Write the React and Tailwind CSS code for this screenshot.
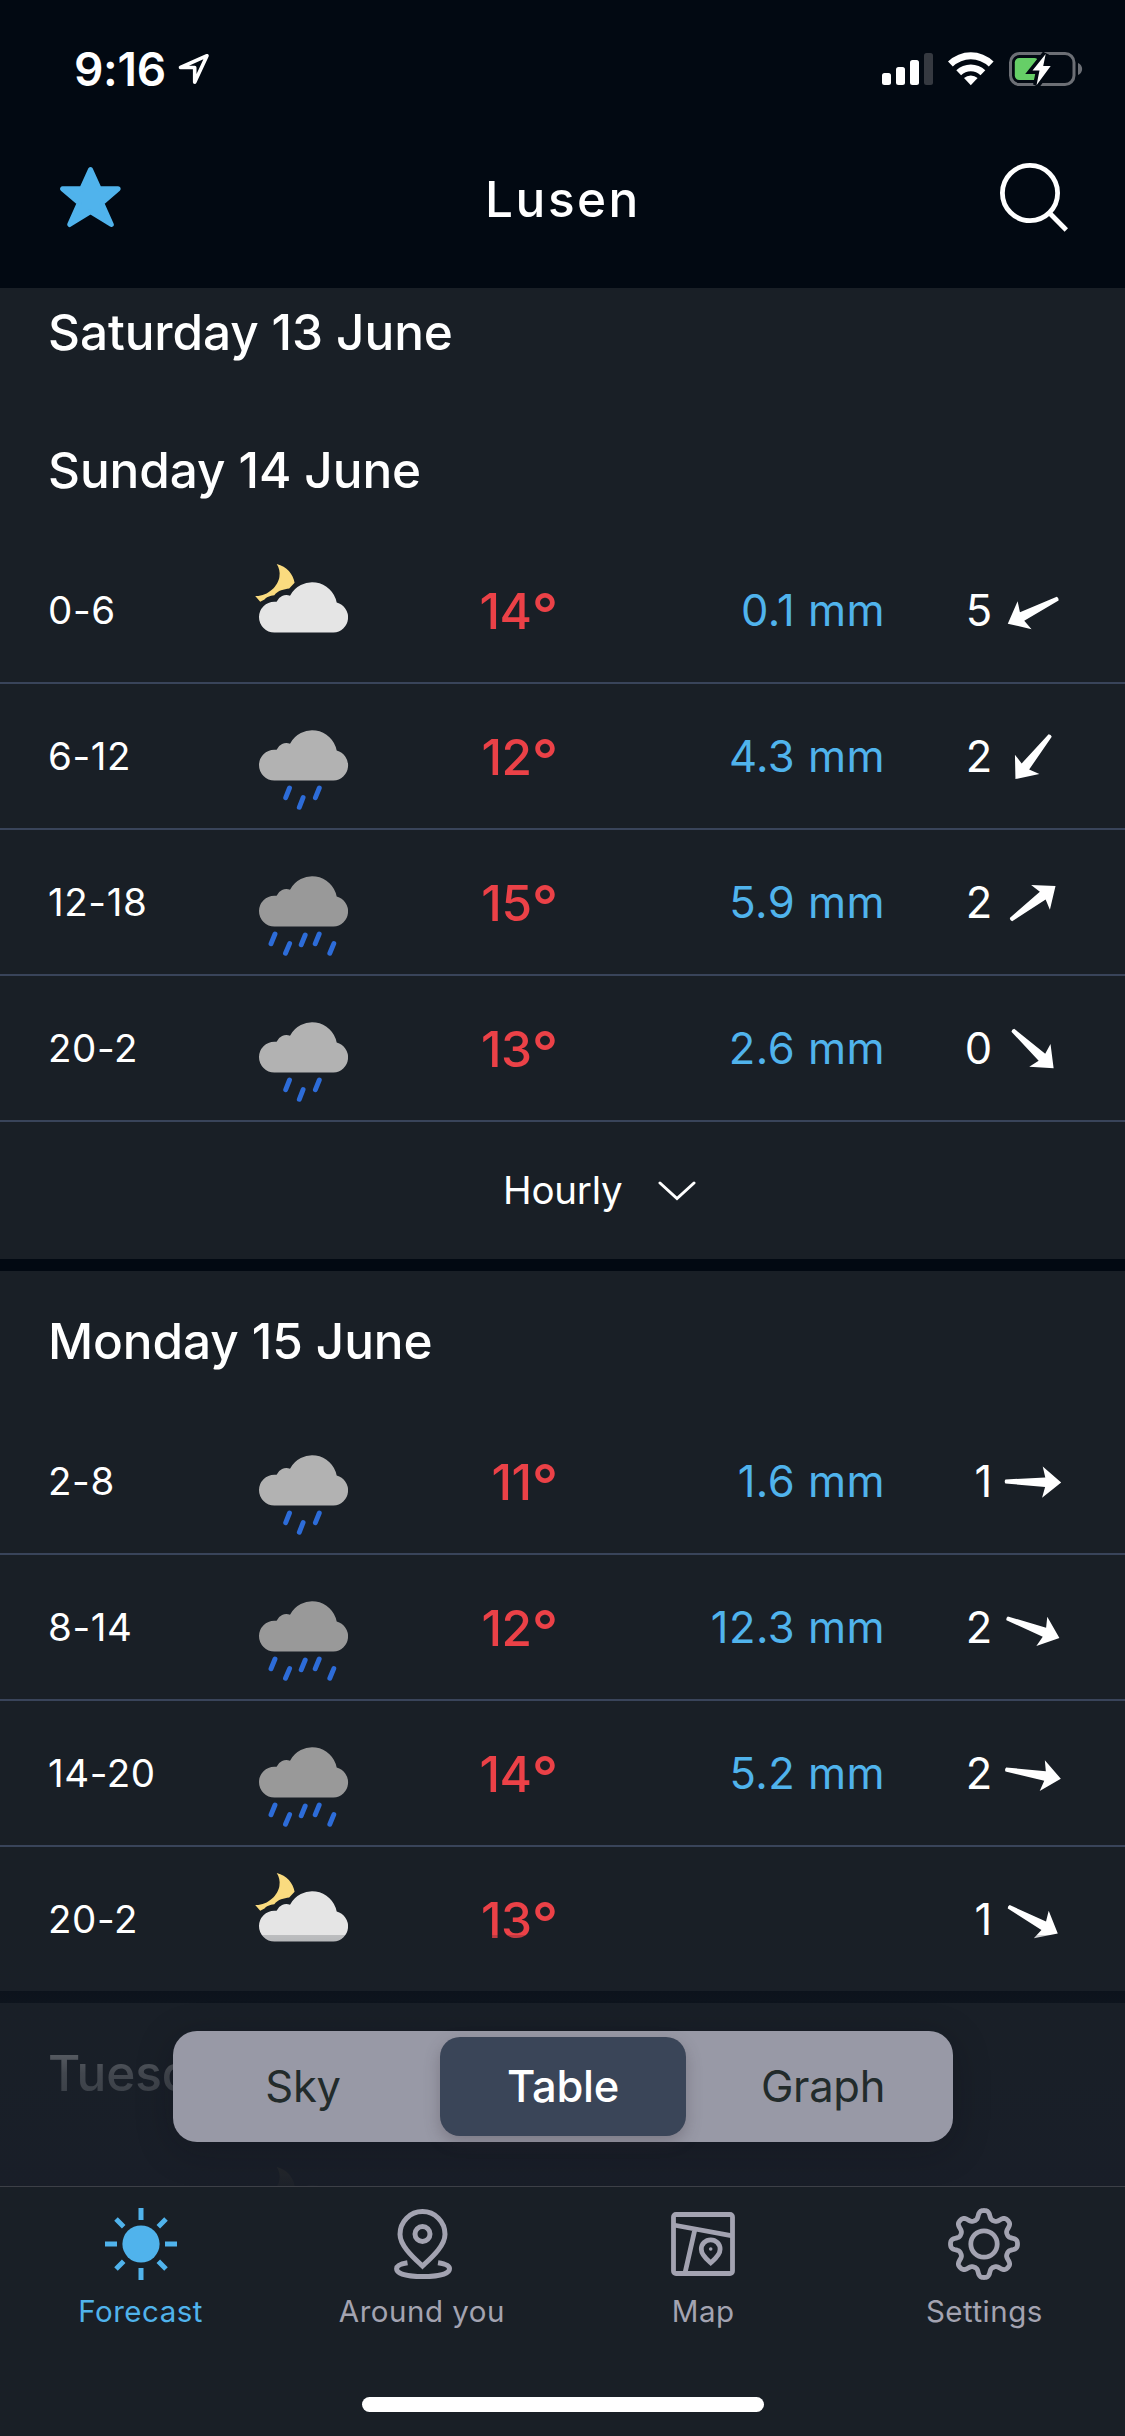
import React, { useState } from "react";

const CLOUD =
  "M15.4 50.5A15.4 15.4 0 0 1 15.4 19.7H17.6A10.5 10.5 0 0 1 31 13.7A25 25 0 0 1 77.7 20.6A15.2 15.2 0 0 1 74.5 50.5Z";

const LIGHT_RAIN = "M30.5 58l-3.8 9.7M44.1 67.6l-3.8 9.7M60.3 58l-3.9 9.7";
const HEAVY_RAIN =
  "M16 58l-4 9.7M30.6 67.6l-4.1 9.7M46.2 59l-4 9.7M60.2 58l-4 9.7M74.8 67.6l-4 9.7";

const days = [
  { title: "Saturday 13 June", rows: [] },
  {
    title: "Sunday 14 June",
    hourly: true,
    rows: [
      { time: "0-6", sky: "night", temp: 14, rain: "0.1 mm", wind: 5, dir: 153.4 },
      { time: "6-12", sky: "light", temp: 12, rain: "4.3 mm", wind: 2, dir: 128.5 },
      { time: "12-18", sky: "heavy", temp: 15, rain: "5.9 mm", wind: 2, dir: -37 },
      { time: "20-2", sky: "light", temp: 13, rain: "2.6 mm", wind: 0, dir: 43 },
    ],
  },
  {
    title: "Monday 15 June",
    rows: [
      { time: "2-8", sky: "light", temp: 11, rain: "1.6 mm", wind: 1, dir: 1.2 },
      { time: "8-14", sky: "heavy", temp: 12, rain: "12.3 mm", wind: 2, dir: 20.5 },
      { time: "14-20", sky: "heavy", temp: 14, rain: "5.2 mm", wind: 2, dir: 9.5 },
      { time: "20-2", sky: "night", temp: 13, rain: "", wind: 1, dir: 28.5 },
    ],
  },
];

// outline of the settings cog, eight rounded teeth
const GEAR =
  Array.from({ length: 241 }, (_, i) => {
    const a = (i / 240) * Math.PI * 2;
    const r = 29.3 + (4.2 * Math.tanh(1.6 * Math.cos(8 * a))) / Math.tanh(1.6);
    const x = (36 + r * Math.sin(a)).toFixed(2);
    const y = (36 - r * Math.cos(a)).toFixed(2);
    return `${i ? "L" : "M"}${x} ${y}`;
  }).join("") + "Z";

function WeatherIcon({ sky }) {
  if (sky === "night") {
    return (
      <svg
        width="90"
        height="51"
        viewBox="0 0 90 51"
        className="mt-[44px] block overflow-visible"
      >
        <path
          d="M17.7 -18C28 -15.5 34 -8 35.6 0.8L30.2 6.4C25 7.3 19 7.8 15.3 13.3C11 13.6 7 15.5 5.5 17.6L1.2 19.8L-3.8 14C9 14.5 19 4 20.4 -5C21.3 -10 20 -14.5 17.7 -18Z"
          fill="#fadb7f"
        />
        <path d={CLOUD} fill="#e5e5e5" />
      </svg>
    );
  }
  return (
    <svg
      width="90"
      height="81"
      viewBox="0 0 90 81"
      className="mt-[46px] block overflow-visible"
    >
      <path d={CLOUD} fill={sky === "heavy" ? "#999999" : "#b2b2b2"} />
      <path
        d={sky === "heavy" ? HEAVY_RAIN : LIGHT_RAIN}
        stroke="#2d6cd8"
        strokeWidth="4.9"
        strokeLinecap="round"
      />
    </svg>
  );
}

function WindArrow({ dir }) {
  return (
    <svg width="60" height="60" viewBox="-30 -30 60 60" className="ml-[11px] mt-[2px]">
      <path
        transform={`rotate(${dir})`}
        d="M-27.6 -2L12.2 -4.8L9.4 -15.6L28.2 0L9.4 15.6L12.2 4.8L-27.6 2Q-29 0 -27.6 -2Z"
        fill="#fff"
      />
    </svg>
  );
}

function Row({ row, last }) {
  return (
    <div
      className={`flex items-center text-[43.5px] ${
        last ? "h-[144px]" : "h-[146px] border-b-2 border-[#39445a]"
      }`}
    >
      <div className="w-[259.2px] pl-[48px] pt-[2px] text-[38.5px] tracking-[0.6px]">
        {row.time}
      </div>
      <div className="h-full w-[90px]">
        <WeatherIcon sky={row.sky} />
      </div>
      <div className="flex w-[209px] justify-end pt-[4px] text-[49.5px] leading-[60px] font-medium tracking-[-0.4px] text-[#eb4147]">
        {row.temp}
        <span className="pt-[3px] text-[58px] tracking-normal">°</span>
      </div>
      <div className="w-[327px] pt-[2px] text-right tracking-[0.5px] text-[#50b3ec]">
        {row.rain}
      </div>
      <div className="w-[107px] pt-[2px] text-right">{row.wind}</div>
      <WindArrow dir={row.dir} />
    </div>
  );
}

function DayTitle({ children }) {
  return (
    <h2 className="flex h-[138px] items-center pl-[48px] pt-[2px] text-[49.5px] font-medium tracking-[-0.1px]">
      {children}
    </h2>
  );
}

function Day({ day }) {
  return (
    <section>
      <DayTitle>{day.title}</DayTitle>
      {day.rows.map((row, i) => (
        <Row
          key={row.time}
          row={row}
          last={!day.hourly && i === day.rows.length - 1}
        />
      ))}
      {day.hourly && (
        <button className="flex h-[137px] w-full items-center pl-[503px] text-[38.5px] tracking-[-0.2px]">
          Hourly
          <svg width="38" height="20" viewBox="0 0 38 20" className="ml-[35px]">
            <path
              d="M2 2L19 17.5L36 2"
              fill="none"
              stroke="#fff"
              strokeWidth="3"
              strokeLinecap="round"
            />
          </svg>
        </button>
      )}
      {day.rows.length > 0 && <div className="h-3 bg-[#020912]" />}
    </section>
  );
}

function StatusBar() {
  return (
    <div className="flex h-[138px] items-center pl-[74px] pr-[42px]">
      <span className="text-[46px] font-semibold tracking-[-0.3px]">9:16</span>
      <svg width="32" height="32" viewBox="0 0 32 32" className="ml-[12px]">
        <path
          d="M29 2.7L2.5 14.5H16.7V29.3Z"
          fill="none"
          stroke="#fff"
          strokeWidth="3.6"
          strokeLinejoin="round"
        />
      </svg>
      <svg width="201" height="36" viewBox="0 0 201 36" className="ml-auto">
        <g fill="#fff">
          <rect x="0" y="22" width="9" height="12" rx="2.5" />
          <rect x="14" y="16" width="9" height="18" rx="2.5" />
          <rect x="28" y="9" width="9" height="25" rx="2.5" />
        </g>
        <rect x="42" y="2" width="9" height="32" rx="2.5" fill="#353940" />
        <g fill="#fff">
          <path d="M66 10.5A33 33 0 0 1 111.6 10.5L106.8 15.6A26 26 0 0 0 70.8 15.6Z" />
          <path d="M74.3 19.2A21 21 0 0 1 103.3 19.2L98.5 24.2A14.2 14.2 0 0 0 79.1 24.2Z" />
          <path d="M82 27.1A10.2 10.2 0 0 1 95.6 27.1L88.8 34.2Z" />
        </g>
        <rect
          x="128.5"
          y="2.5"
          width="63.5"
          height="31"
          rx="9"
          fill="none"
          stroke="#6c6f75"
          strokeWidth="3"
        />
        <path d="M196 12V24C201.5 22 201.5 14 196 12Z" fill="#6c6f75" />
        <rect x="132.8" y="7" width="24" height="22" rx="4.5" fill="#66cf67" />
        <path
          d="M163.7 3L150.5 19.5H157.5L154.5 34.3L168.7 15H161.2Z"
          fill="#fff"
          stroke="#020912"
          strokeWidth="7"
        />
        <path d="M163.7 3L150.5 19.5H157.5L154.5 34.3L168.7 15H161.2Z" fill="#fff" />
      </svg>
    </div>
  );
}

function Header() {
  return (
    <header className="h-[288px] shrink-0 bg-[#020912]">
      <StatusBar />
      <div className="flex h-[122px] items-center justify-between pl-[58px] pr-[56px]">
        <svg width="66" height="66" viewBox="0 0 66 66" className="mb-[4px]">
          <path
            d="M32.5 5.5L41.2 24.7L60.2 24.8L43.7 39L53.3 60.5L32.5 47.6L11.7 60.5L21.3 39L4.5 24.8L23.8 24.7Z"
            fill="#50b3ec"
            stroke="#50b3ec"
            strokeWidth="5"
            strokeLinejoin="round"
          />
        </svg>
        <h1 className="pl-[3px] text-[49.5px] font-medium tracking-[2.5px]">Lusen</h1>
        <svg width="70" height="70" viewBox="0 0 70 70" className="mb-[4px]">
          <circle cx="31" cy="31" r="27.6" fill="none" stroke="#fff" strokeWidth="4.8" />
          <path d="M51 51.5L67.3 68" stroke="#fff" strokeWidth="4.8" />
        </svg>
      </div>
    </header>
  );
}

function SunIcon() {
  return (
    <svg width="72" height="72" viewBox="0 0 72 72">
      <circle cx="36" cy="36" r="18.6" fill="currentColor" />
      <path
        d="M36 0V12M36 60V72M0 36H12M60 36H72M11 11L18.7 18.7M53.3 53.3L61 61M61 11L53.3 18.7M18.7 53.3L11 61"
        stroke="currentColor"
        strokeWidth="5"
      />
    </svg>
  );
}

function PinIcon() {
  return (
    <svg width="72" height="72" viewBox="0 0 72 72" fill="none" stroke="currentColor" strokeWidth="5">
      <path d="M36.5 58C28 50 14 38 14 26.2A22.5 22.7 0 0 1 59 26.2C59 38 45 50 36.5 58Z" />
      <circle cx="36.5" cy="26" r="7.5" />
      <path d="M21.5 54.8C14 56 10.6 58 10.6 60.7C10.6 66 22 68.5 37 68.5S63.5 66 63.5 60.7C63.5 58 60 56 52 54.8" />
    </svg>
  );
}

function MapIcon() {
  return (
    <svg width="72" height="72" viewBox="0 0 72 72" fill="none" stroke="currentColor" strokeWidth="4.8">
      <rect x="6.5" y="6.5" width="59" height="59" rx="2.5" />
      <path d="M6.5 17L65.5 27.8M28 21L18 65" />
      <path d="M43.7 54.8C40 51.5 34.3 47 34.3 41.2A9.4 9.4 0 0 1 53.1 41.2C53.1 47 47.4 51.5 43.7 54.8Z" />
      <circle cx="43.7" cy="41" r="1.8" fill="currentColor" stroke="none" />
    </svg>
  );
}

function GearIcon() {
  return (
    <svg width="72" height="72" viewBox="0 0 72 72" fill="none" stroke="currentColor" strokeWidth="4.8">
      <path d={GEAR} strokeLinejoin="round" />
      <circle cx="36" cy="36" r="13.2" />
    </svg>
  );
}

const tabs = [
  { label: "Forecast", Icon: SunIcon },
  { label: "Around you", Icon: PinIcon },
  { label: "Map", Icon: MapIcon },
  { label: "Settings", Icon: GearIcon },
];

function TabBar() {
  const [active, setActive] = useState("Forecast");

  return (
    <nav className="h-[250px] shrink-0 border-t border-[#3d4047] bg-[#191f26]">
      <div className="grid grid-cols-4 pt-[21px]">
        {tabs.map(({ label, Icon }) => (
          <button
            key={label}
            onClick={() => setActive(label)}
            className={`flex flex-col items-center text-[29.5px] leading-[36px] tracking-[0.5px] ${
              active === label ? "text-[#50b3ec]" : "text-[#a3a3b1]"
            }`}
          >
            <Icon />
            <span className="mt-[13px]">{label}</span>
          </button>
        ))}
      </div>
      <div className="mx-auto mt-[68px] h-[15px] w-[402px] rounded-full bg-white" />
    </nav>
  );
}

function ViewSwitch() {
  const [view, setView] = useState("Table");

  return (
    <div className="absolute bottom-[44px] left-[173px] grid h-[111px] w-[780px] grid-cols-3 rounded-[24px] bg-[#9899a6] py-[6px] shadow-[0_8px_36px_rgba(10,10,20,0.25)]">
      {["Sky", "Table", "Graph"].map((name) => (
        <button
          key={name}
          onClick={() => setView(name)}
          className={`mx-[7px] rounded-[20px] text-[43.5px] tracking-[-0.3px] ${
            view === name
              ? "bg-[#3a4558] font-medium text-white shadow-[0_6px_16px_rgba(60,50,60,0.3)]"
              : "text-[#222b2b]"
          }`}
        >
          {name}
        </button>
      ))}
    </div>
  );
}

export default function App() {
  return (
    <div className="flex h-[2436px] w-[1125px] flex-col overflow-hidden bg-[#191f26] font-['Inter',sans-serif] text-white">
      <Header />
      <main className="relative flex-1 overflow-hidden">
        <div className="-mt-[26px]">
          {days.map((day) => (
            <Day key={day.title} day={day} />
          ))}
          <DayTitle>Tuesday</DayTitle>
          <div className="h-[146px] pl-[259.2px]">
            <WeatherIcon sky="night" />
          </div>
        </div>
        {/* fade behind the view switch */}
        <div className="absolute inset-x-0 bottom-0 h-[251px] bg-linear-to-b from-[#191f28]/20 via-[#191f28]/82 via-55% to-[#191e28]/98" />
        <ViewSwitch />
      </main>
      <TabBar />
    </div>
  );
}
